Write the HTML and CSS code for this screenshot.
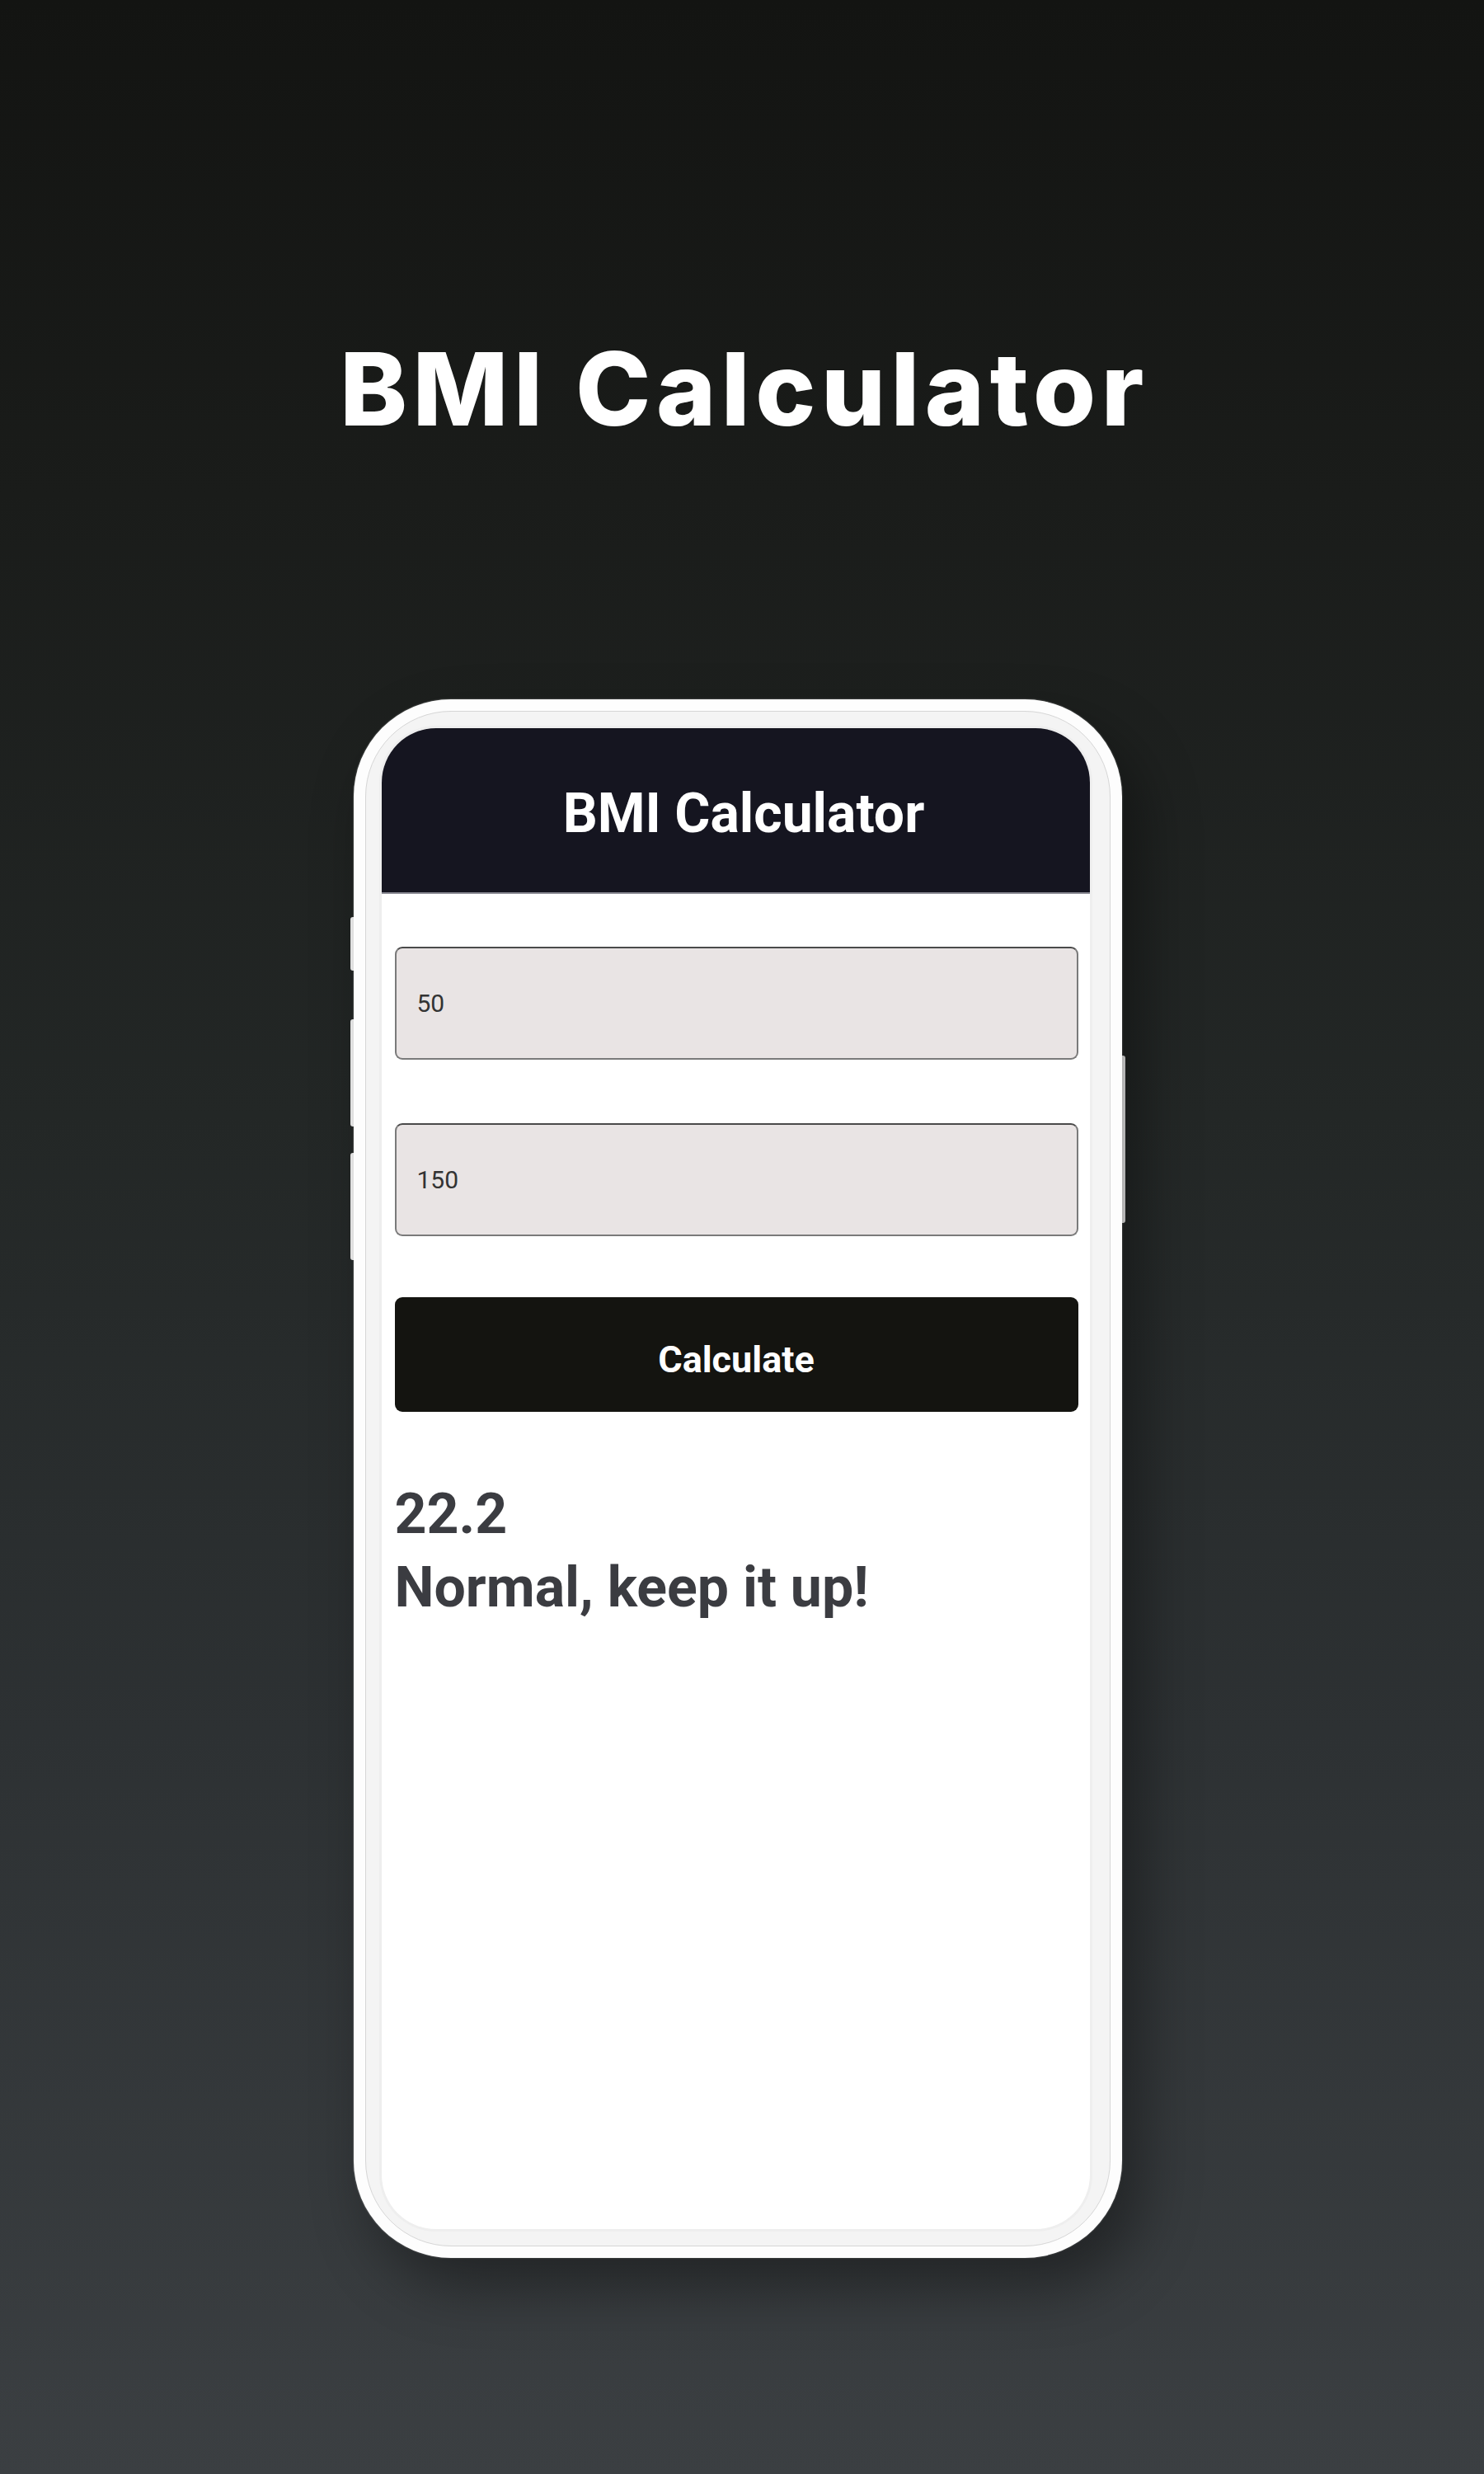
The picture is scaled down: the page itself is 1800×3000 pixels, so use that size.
FILE: index.html
```html
<!DOCTYPE html>
<html lang="en">
<head>
<meta charset="utf-8">
<title>BMI Calculator</title>
<link rel="stylesheet" href="styles.css">
</head>
<body>
<main class="page">
  <h1 class="hero-title">BMI Calculator</h1>
  <div class="phone">
    <span class="side-btn side-btn--l1"></span>
    <span class="side-btn side-btn--l2"></span>
    <span class="side-btn side-btn--l3"></span>
    <span class="side-btn side-btn--r1"></span>
    <div class="bezel">
      <div class="screen">
        <header class="app-bar">
          <div class="app-title">BMI Calculator</div>
        </header>
        <section class="content">
          <input class="field" type="text" value="50" readonly>
          <input class="field" type="text" value="150" readonly>
          <button class="calc-btn" type="button">Calculate</button>
          <div class="result">
            <div class="result-line">22.2</div>
            <div class="result-line">Normal, keep it up!</div>
          </div>
        </section>
      </div>
    </div>
  </div>
</main>
</body>
</html>
```
FILE: styles.css
```css
* { box-sizing: border-box; }

html, body {
  margin: 0;
  padding: 0;
}

body {
  width: 1800px;
  height: 3000px;
  background: linear-gradient(180deg, #131412 0%, #1a1c1a 20%, #232726 45%, #2d3133 70%, #3b3f42 100%);
  font-family: Roboto, "Noto Sans", sans-serif;
  overflow: hidden;
}

.page {
  display: flex;
  flex-direction: column;
  padding-top: 411px;
}

.hero-title {
  margin: 0;
  font-family: Inter, "Noto Sans", sans-serif;
  font-weight: 800;
  font-size: 123px;
  line-height: 122px;
  color: #ffffff;
  text-align: center;
  letter-spacing: 6.5px;
  padding-left: 6px;
}

.phone {
  position: relative;
  margin-top: 315px;
  margin-left: 429px;
  width: 932px;
  height: 1890px;
  border-radius: 118px;
  background: #fdfdfd;
  padding: 14px;
  box-shadow: 22px 34px 70px rgba(0, 0, 0, 0.38), 0 0 2px rgba(255,255,255,0.5);
}

.side-btn {
  position: absolute;
  width: 7px;
  background: #f7f7f7;
  border-radius: 3px;
  z-index: -1;
}
.side-btn--l1 { left: -4px; top: 264px; height: 65px; }
.side-btn--l2 { left: -4px; top: 388px; height: 130px; }
.side-btn--l3 { left: -4px; top: 550px; height: 130px; }
.side-btn--r1 { right: -4px; top: 432px; height: 203px; }

.bezel {
  width: 100%;
  height: 100%;
  border: 1.5px solid #d6d6d6;
  border-radius: 104px;
  background: #f4f4f4;
  padding: 19.5px 23.5px 19.5px 18.5px;
}

.screen {
  width: 859px;
  height: 1820px;
  border-radius: 66px;
  overflow: hidden;
  background: #ffffff;
  display: flex;
  flex-direction: column;
  box-shadow: 0 0 0 3px #eeeeee;
}

.app-bar {
  height: 201px;
  flex: none;
  background: #151520;
  border-bottom: 2px solid #8d8d96;
  display: flex;
  align-items: center;
  justify-content: center;
  padding-left: 20px;
  padding-top: 9px;
}

.app-title {
  color: #ffffff;
  font-family: Roboto, sans-serif;
  font-weight: 700;
  font-size: 66px;
}

.content {
  display: flex;
  flex-direction: column;
  padding: 64px 14px 0 16px;
}

.field {
  display: block;
  width: 100%;
  height: 137px;
  margin: 0;
  background: #e9e4e4;
  border: 2px solid #7a7a7a;
  border-top-color: #4a4a4a;
  border-radius: 9px;
  padding: 0 0 0 25px;
  font-family: Roboto, sans-serif;
  font-size: 30px;
  color: #333333;
  outline: none;
}

.field + .field {
  margin-top: 77px;
}

.calc-btn {
  margin-top: 74px;
  width: 100%;
  height: 139px;
  background: #141410;
  border: none;
  border-radius: 9px;
  color: #ffffff;
  font-family: Roboto, sans-serif;
  font-weight: 700;
  font-size: 45px;
  padding: 12px 0 0 0;
}

.result {
  margin-top: 80px;
  display: flex;
  flex-direction: column;
}

.result-line {
  font-family: Roboto, sans-serif;
  font-weight: 700;
  font-size: 68px;
  line-height: 89px;
  color: #3b3c41;
}
```
